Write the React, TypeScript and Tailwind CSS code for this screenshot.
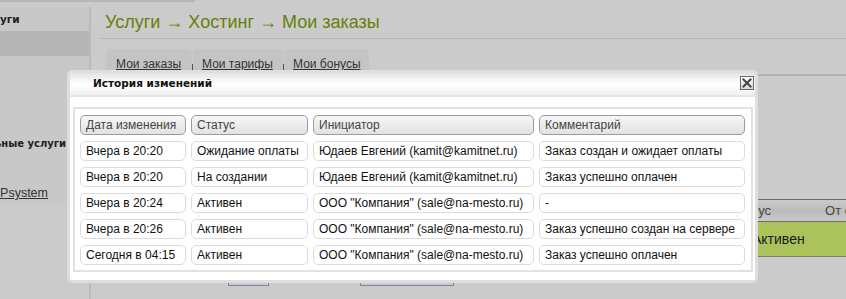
import React from "react";

const rows: string[][] = [
  ["Вчера в 20:20", "Ожидание оплаты", "Юдаев Евгений (kamit@kamitnet.ru)", "Заказ создан и ожидает оплаты"],
  ["Вчера в 20:20", "На создании", "Юдаев Евгений (kamit@kamitnet.ru)", "Заказ успешно оплачен"],
  ["Вчера в 20:24", "Активен", 'ООО "Компания" (sale@na-mesto.ru)', "-"],
  ["Вчера в 20:26", "Активен", 'ООО "Компания" (sale@na-mesto.ru)', "Заказ успешно создан на сервере"],
  ["Сегодня в 04:15", "Активен", 'ООО "Компания" (sale@na-mesto.ru)', "Заказ успешно оплачен"],
];

const headers = ["Дата изменения", "Статус", "Инициатор", "Комментарий"];

export default function App() {
  return (
    <div className="relative w-[846px] h-[299px] overflow-hidden bg-[#cbcbcb] font-['Liberation_Sans',Arial,sans-serif]">
      <div className="h-[2px] w-[195px] bg-[#b6b6b6]" />
      <div className="flex mt-[5px]">
        {/* sidebar */}
        <div className="w-[89px] shrink-0 h-[198px] bg-[#c8c8c8] overflow-hidden flex flex-col">
          <div className="h-[24px] pt-[2px] flex items-center whitespace-nowrap font-['DejaVu_Sans',sans-serif] font-bold text-[10.5px] text-[#222]">
            <span className="ml-[-22px]">Услуги</span>
          </div>
          <div className="h-[25px] bg-[#b5b5b5]" />
          <div className="mt-[80px] w-[66px] flex justify-end whitespace-nowrap font-['DejaVu_Sans',sans-serif] font-bold text-[10px] text-[#222]">
            <span>Дополнительные услуги</span>
          </div>
          <div className="mt-[33px] w-[48px] flex justify-end whitespace-nowrap text-[12.5px] text-[#333]">
            <span className="underline">WebMoney Psystem</span>
          </div>
        </div>
        <div className="w-[2px] shrink-0 h-[292px] bg-[#bababa]" />
        {/* main */}
        <div className="flex-1 min-w-0 ml-[10px] flex flex-col">
          <div className="h-[32px] flex items-center pl-[4px] border-b border-[#b4b4b4] text-[18px] text-[#66800a] whitespace-nowrap">
            Услуги → Хостинг → Мои заказы
          </div>
          <div className="mt-[10px] flex border-b-2 border-[#b2b2b2] h-[27px]">
            <div className="ml-[5px] flex h-[25px]">
              <div className="w-[86px] bg-[#c4c4c4] rounded-t-[5px] pl-[10px] pt-[6px] text-[12px] text-[#333] relative">
                <span className="underline">Мои заказы</span>
                <div className="absolute right-[-1px] top-[15px] w-px h-[10px] bg-[#555]" />
              </div>
              <div className="ml-px w-[90px] bg-[#c4c4c4] rounded-t-[5px] pl-[9px] pt-[6px] text-[12px] text-[#333] relative">
                <span className="underline">Мои тарифы</span>
                <div className="absolute right-[-1px] top-[15px] w-px h-[10px] bg-[#555]" />
              </div>
              <div className="ml-px w-[85px] bg-[#c4c4c4] rounded-t-[5px] pl-[9px] pt-[6px] text-[12px] text-[#333]">
                <span className="underline">Мои бонусы</span>
              </div>
            </div>
          </div>
          {/* background table */}
          <div className="mt-[123px] border-t border-[#6b6b6b]">
            <div className="h-[21px] flex items-center bg-gradient-to-b from-[#cacaca] via-[#bcbcbc] to-[#c8c8c8] text-[13px] text-[#444] whitespace-nowrap overflow-hidden">
              <span className="ml-[629px] shrink-0">Статус</span>
              <span className="ml-[54px] shrink-0">От создания</span>
            </div>
            <div className="border-t border-[#6b6b6b] h-[35px] bg-[#abc35a] flex items-center text-[14px] text-[#1a1a1a] whitespace-nowrap">
              <span className="ml-[651px]">Активен</span>
            </div>
            <div className="h-px bg-[#7a7a7a]" />
          </div>
          <div className="mt-[4px] flex">
            <div className="ml-[127px] shrink-0 w-[41px] h-[25px] border border-[#7a8aa6]" />
            <div className="ml-[91px] shrink-0 w-[94px] h-[25px] border border-[#7a8aa6]" />
          </div>
        </div>
      </div>

      {/* modal */}
      <div className="absolute left-[67px] top-[70px] w-[691px] h-[213px] border-[3px] border-[#dedede] rounded-[5px] bg-white flex flex-col overflow-hidden">
        <div className="h-[24px] bg-gradient-to-b from-[#e4e4e4] via-white to-[#f1f1f1] border-b-2 border-[#e4e4e4] flex items-center relative">
          <span className="ml-[23px] font-['DejaVu_Sans',sans-serif] font-bold text-[10.5px] text-[#111]">
            История изменений
          </span>
          <div className="absolute left-[670px] top-[3px] w-[14px] h-[14px] border border-[#6a6a6a] bg-gradient-to-b from-white to-[#d8d8d8] flex items-center justify-center">
            <svg width="10" height="10" viewBox="0 0 10 10">
              <path d="M1.5 1.5 L8.5 8.5 M8.5 1.5 L1.5 8.5" stroke="#444" strokeWidth="2" strokeLinecap="square" />
            </svg>
          </div>
        </div>
        <div className="mt-[10px] ml-[3px] w-[680px] border-2 border-[#e2e2e2] pl-[5px] pt-[6px] pb-[5px]">
          <div className="grid grid-cols-[106px_117px_221px_206px] gap-x-[5px] gap-y-[6px]">
            {headers.map((h) => (
              <div
                key={h}
                className="h-[20px] rounded-[5px] border border-[#9c9c9c] bg-gradient-to-b from-[#f7f7f7] to-[#e2e2e2] flex items-center pl-[5px] text-[12px] text-[#444] whitespace-nowrap"
              >
                {h}
              </div>
            ))}
            {rows.map((r, i) =>
              r.map((c, j) => (
                <div
                  key={i + "-" + j}
                  className="h-[20px] rounded-[5px] border border-[#dcdcdc] bg-white flex items-center pl-[5px] text-[12px] text-[#111] whitespace-nowrap overflow-hidden"
                >
                  {c}
                </div>
              ))
            )}
          </div>
        </div>
      </div>
    </div>
  );
}
